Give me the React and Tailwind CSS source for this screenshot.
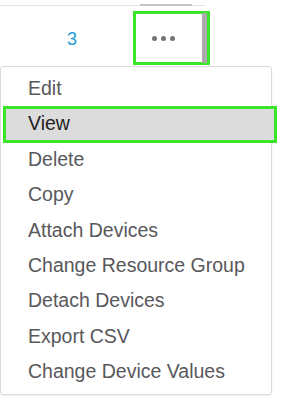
import React from "react";

const items = [
  "Edit",
  "View",
  "Delete",
  "Copy",
  "Attach Devices",
  "Change Resource Group",
  "Detach Devices",
  "Export CSV",
  "Change Device Values",
];

export default function App() {
  return (
    <div
      className="w-[287px] h-[399px] bg-white overflow-hidden"
      style={{ fontFamily: '"Liberation Sans", Arial, sans-serif' }}
    >
      <div className="pt-[5px]">
        <div className="relative w-[205px] h-px bg-[#e2e2e2]">
          <div className="absolute left-[140px] top-[-1px] w-[52px] h-[2px] bg-[#c4c4c4]" />
        </div>
      </div>
      <div className="flex items-center h-[54px] mt-[5px]">
        <div className="w-[133px] pl-[67px] pt-[2px] text-[18px] leading-none text-[#1e9ad8]">3</div>
        <div className="w-[77px] h-[54px] border-[3px] border-[#3be528] flex items-stretch">
          <div className="flex-1 flex items-center pl-[16px] gap-[4px]">
            <span className="w-[5px] h-[5px] rounded-full bg-[#737373]" />
            <span className="w-[5px] h-[5px] rounded-full bg-[#737373]" />
            <span className="w-[5px] h-[5px] rounded-full bg-[#737373]" />
          </div>
          <div className="w-[5px] my-[-1px] bg-[#ababab]" />
        </div>
      </div>
      <div className="mt-[1px] w-[272px] border border-[#dcdcdc] rounded-[3px] bg-white py-[4px] shadow-[0_1px_2px_rgba(0,0,0,0.08)]">
        {items.map((label) => (
          <div
            key={label}
            className="relative h-[35.4px] flex items-center pl-[27px] text-[19.5px] leading-none"
          >
            {label === "View" && (
              <div className="absolute top-[-0.5px] bottom-[-1px] left-[2px] right-[-6px] border-[3px] border-[#3be528] bg-[#dcdcdc]" />
            )}
            <span
              className={
                label === "View"
                  ? "relative text-[#1f1f1f]"
                  : "relative text-[#58585b]"
              }
            >
              {label}
            </span>
          </div>
        ))}
      </div>
    </div>
  );
}
